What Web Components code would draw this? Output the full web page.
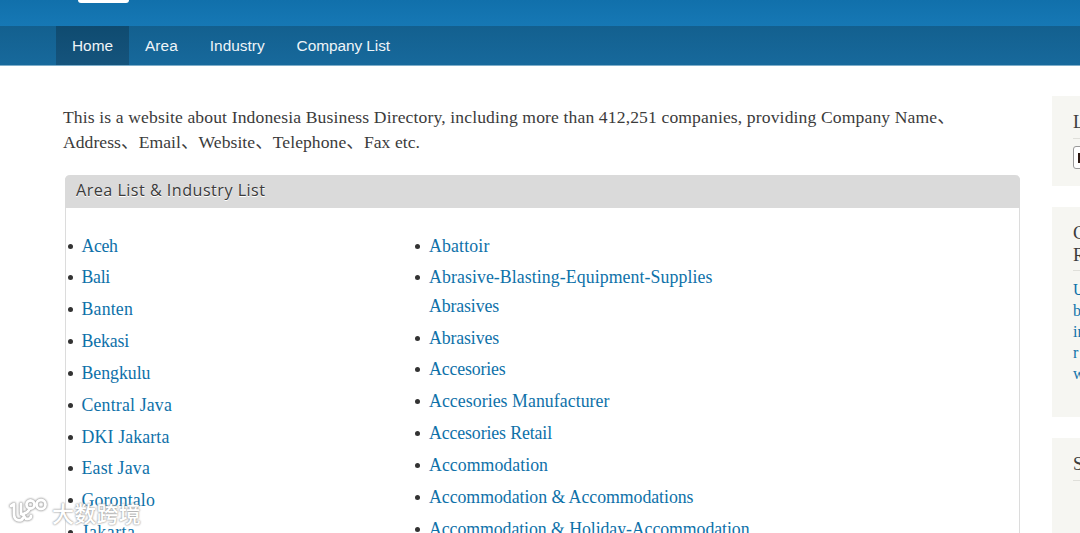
<!DOCTYPE html>
<html lang="en">
<head>
<meta charset="utf-8">
<title>Indonesia Business Directory</title>
<style>
  html, body {
    margin: 0;
    height: 533px;
    overflow: hidden;
  }
  body {
    background: #fff;
    color: #3b3b3b;
    font-family: Georgia, "Liberation Serif", "Noto Sans CJK SC", serif;
  }
</style>
</head>
<body>
<directory-page></directory-page>
<script>
// One line of text, letter-spaced so that it takes the given width
class FitText extends HTMLElement {
  constructor(){
    super()
    this.attachShadow({mode: 'open'}).innerHTML = `
      <style>
        :host { display: inline-block; white-space: nowrap; }
      </style>
      <slot></slot>
    `
  }

  connectedCallback(){
    const width = Number(this.getAttribute('width'))
    const count = [...this.textContent].length
    const natural = this.getBoundingClientRect().width
    if (width && count) {
      this.style.letterSpacing = `${(width - natural) / count}px`
    }
  }
}

class SiteHeader extends HTMLElement {
  constructor(){
    super()
    this.attachShadow({mode: 'open'}).innerHTML = `
      <style>
        :host {
          display: block;
          height: 66px;
          font-family: "Liberation Sans", Arial, sans-serif;
        }
        .banner {
          box-sizing: border-box;
          height: 26px;
          padding-left: 78px;
          background: linear-gradient(#1170ab, #1678b5);
        }
        .logo {
          width: 51px;
          height: 3px;
          background: #fff;
          border-radius: 0 0 6px 6px;
        }
        nav {
          box-sizing: border-box;
          display: flex;
          height: 40px;
          padding-left: 56px;
          border-bottom: 1px solid #7eaeca;
          background: linear-gradient(#13608f, #17699c);
        }
        a {
          box-sizing: border-box;
          padding: 0 16px;
          color: #eef4f8;
          font-size: 15.4px;
          line-height: 39px;
        }
        a.active { background: linear-gradient(#0f4b70, #15547d); }
      </style>
      <div class="banner"><div class="logo"></div></div>
      <nav>
        <a class="active"><fit-text width="41">Home</fit-text></a>
        <a><fit-text width="32.8">Area</fit-text></a>
        <a><fit-text width="54.8">Industry</fit-text></a>
        <a><fit-text width="93.5">Company List</fit-text></a>
      </nav>
    `
  }
}

class LinkList extends HTMLElement {
  constructor(){
    super()
    this.attachShadow({mode: 'open'})
  }

  set items(items){
    this.shadowRoot.innerHTML = `
      <style>
        :host { display: block; }
        ul { margin: 0; padding: 0; list-style: none; }
        li {
          display: flex;
          margin-bottom: 3.5px;
          font-size: 17.8px;
          line-height: 28.35px;
        }
        li::before {
          content: "";
          flex: none;
          width: 5px;
          height: 5px;
          margin: 12px 9px 0 0;
          border-radius: 50%;
          background: #333;
        }
        a { color: #0e71a9; }
        fit-text { display: block; width: max-content; }
      </style>
      <ul>
        ${items.map(lines => `<li><a>${lines.map(([text, width]) =>
          `<fit-text width="${width}">${text}</fit-text>`).join('')}</a></li>`).join('')}
      </ul>
    `
  }
}

class ListPanel extends HTMLElement {
  constructor(){
    super()
    this.attachShadow({mode: 'open'}).innerHTML = `
      <style>
        :host {
          display: block;
          box-sizing: border-box;
          width: 955px;
          border: 1px solid #dcdcdc;
          border-top: 0;
          border-radius: 5px 5px 0 0;
        }
        header {
          box-sizing: border-box;
          height: 33px;
          margin: 0 -1px;
          padding-left: 11px;
          background: #dadada;
          border-radius: 5px 5px 0 0;
          color: #3b3b3b;
          font: 16.2px/31px "Open Sans", "Noto Sans", sans-serif;
          text-shadow: 0 1px 0 #fff;
        }
        .body {
          display: grid;
          grid-template-columns: 347.5px 1fr;
          height: 400px;
          padding: 23.5px 0 0 1.5px;
        }
      </style>
      <header><slot name="title"></slot></header>
      <div class="body"><slot></slot></div>
    `
  }
}

class SideBlock extends HTMLElement {
  constructor(){
    super()
    this.attachShadow({mode: 'open'}).innerHTML = `
      <style>
        :host {
          display: block;
          box-sizing: border-box;
          width: 240px;
          padding: 16px 20px 0 21px;
          background: #f6f6f2;
        }
        .title {
          padding-bottom: 4px;
          margin-bottom: 7.5px;
          border-bottom: 1px solid #dfdfda;
          font-size: 18.5px;
          line-height: 21.5px;
        }
        .content {
          color: #0e71a9;
          font-size: 16px;
          line-height: 21px;
        }
      </style>
      <div class="title"><slot name="title"></slot></div>
      <div class="content"><slot></slot></div>
    `
  }
}

class FlagSelect extends HTMLElement {
  constructor(){
    super()
    this.attachShadow({mode: 'open'}).innerHTML = `
      <style>
        :host {
          display: block;
          box-sizing: border-box;
          width: 150px;
          height: 23px;
          padding: 6px 4px;
          background: #fff;
          border: 1px solid #999;
          border-radius: 3px;
        }
        i {
          display: block;
          width: 14px;
          height: 10px;
          background: #2b1710;
        }
      </style>
      <i></i>
    `
  }
}

class WaterMark extends HTMLElement {
  constructor(){
    super()
    this.attachShadow({mode: 'open'}).innerHTML = `
      <style>
        :host {
          position: absolute;
          left: 8px;
          top: 496px;
          display: flex;
          align-items: center;
          gap: 4px;
          color: #fff;
          font: 500 22px/32px "Noto Sans CJK SC", sans-serif;
          text-shadow: 0 0 2px #999, 0 0 2px #aaa;
        }
        svg { filter: drop-shadow(0 0 1px #999) drop-shadow(0 0 .5px #aaa); }
      </style>
      <svg width="40" height="32" viewBox="0 0 40 32" fill="none" stroke="#fff" stroke-width="2.8" stroke-linecap="round" stroke-linejoin="round">
        <path d="M3 10l3-2v10c0 7 7 8 9 4M13 8v8"/>
        <path d="M21 14c-2 3-4 4-8 4 4 0 3 5 6 5s4-1 4-3"/>
        <circle cx="22.500" cy="8.500" r="4"/>
        <circle cx="33" cy="8.500" r="4.500"/>
      </svg>
      <fit-text width="89">大数跨境</fit-text>
    `
  }
}

const areas = [
  [['Aceh', 36]],
  [['Bali', 28.5]],
  [['Banten', 51.5]],
  [['Bekasi', 47.5]],
  [['Bengkulu', 69]],
  [['Central Java', 90.5]],
  [['DKI Jakarta', 88]],
  [['East Java', 68.5]],
  [['Gorontalo', 73.5]],
  [['Jakarta', 54]]
]

const industries = [
  [['Abattoir', 60.5]],
  [['Abrasive-Blasting-Equipment-Supplies', 283.5], ['Abrasives', 70]],
  [['Abrasives', 70]],
  [['Accesories', 76.5]],
  [['Accesories Manufacturer', 180.5]],
  [['Accesories Retail', 123]],
  [['Accommodation', 119]],
  [['Accommodation &amp; Accommodations', 264.5]],
  [['Accommodation &amp; Holiday-Accommodation', 320.5]]
]

class DirectoryPage extends HTMLElement {
  constructor(){
    super()
    this.attachShadow({mode: 'open'}).innerHTML = `
      <style>
        :host {
          display: block;
          position: relative;
          width: 1080px;
          height: 533px;
          overflow: hidden;
        }
        .columns {
          display: grid;
          grid-template-columns: 957px 240px;
          column-gap: 32px;
          padding: 30px 0 0 63px;
        }
        .intro {
          margin: 9px 0 20px;
          height: 50px;
          font-size: 17.6px;
          line-height: 24.8px;
        }
        .intro fit-text { display: block; width: max-content; }
        list-panel { margin-left: 2px; }
        aside {
          display: flex;
          flex-direction: column;
          gap: 21px;
        }
        .language { height: 90px; }
        .recent { height: 210px; }
        .search { height: 180px; }
      </style>
      <site-header></site-header>
      <div class="columns">
        <main>
          <div class="intro">
            <fit-text width="892">This is a website about Indonesia Business Directory, including more than 412,251 companies, providing Company Name、</fit-text>
            <fit-text width="357">Address、Email、Website、Telephone、Fax etc.</fit-text>
          </div>
          <list-panel>
            <fit-text slot="title" width="189.500">Area List &amp; Industry List</fit-text>
            <link-list id="areas"></link-list>
            <link-list id="industries"></link-list>
          </list-panel>
        </main>
        <aside>
          <side-block class="language">
            <span slot="title">L</span>
            <flag-select></flag-select>
          </side-block>
          <side-block class="recent">
            <span slot="title">C<br>R</span>
            U<br>b<br>in<br>r<br>w
          </side-block>
          <side-block class="search">
            <span slot="title">S</span>
          </side-block>
        </aside>
      </div>
      <water-mark></water-mark>
    `
  }

  connectedCallback(){
    this.shadowRoot.querySelector('#areas').items = areas
    this.shadowRoot.querySelector('#industries').items = industries
  }
}

customElements.define('fit-text', FitText)
customElements.define('site-header', SiteHeader)
customElements.define('link-list', LinkList)
customElements.define('list-panel', ListPanel)
customElements.define('side-block', SideBlock)
customElements.define('flag-select', FlagSelect)
customElements.define('water-mark', WaterMark)
customElements.define('directory-page', DirectoryPage)
</script>
</body>
</html>
